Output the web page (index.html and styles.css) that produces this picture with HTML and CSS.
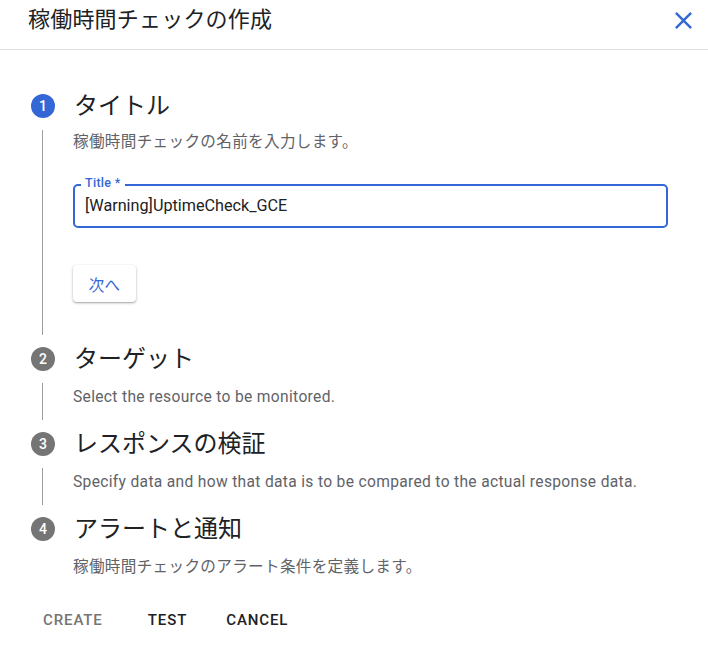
FILE: index.html
```html
<!DOCTYPE html>
<html lang="ja">
<head>
<meta charset="utf-8">
<link rel="stylesheet" href="styles.css">
</head>
<body>
<div class="dialog">
  <header class="header">
    <h1 class="header-title">稼働時間チェックの作成</h1>
    <button class="close-btn" aria-label="close">
      <svg viewBox="0 0 24 24" width="29" height="29"><path fill="#3367d6" d="M19 6.41L17.59 5 12 10.59 6.41 5 5 6.41 10.59 12 5 17.59 6.41 19 12 13.41 17.59 19 19 17.59 13.41 12z"/></svg>
    </button>
  </header>

  <main class="stepper">
    <section class="step">
      <div class="step-head">
        <span class="step-num active">1</span>
        <h2 class="step-title">タイトル</h2>
      </div>
      <div class="step-body step-body-open">
        <p class="step-desc">稼働時間チェックの名前を入力します。</p>
        <div class="field">
          <span class="field-label">Title *</span>
          <div class="field-value">[Warning]UptimeCheck_GCE</div>
        </div>
        <button class="next-btn">次へ</button>
      </div>
    </section>

    <section class="step">
      <div class="step-head">
        <span class="step-num">2</span>
        <h2 class="step-title">ターゲット</h2>
      </div>
      <div class="step-body">
        <p class="step-desc">Select the resource to be monitored.</p>
      </div>
    </section>

    <section class="step">
      <div class="step-head">
        <span class="step-num">3</span>
        <h2 class="step-title">レスポンスの検証</h2>
      </div>
      <div class="step-body">
        <p class="step-desc">Specify data and how that data is to be compared to the actual response data.</p>
      </div>
    </section>

    <section class="step step-last">
      <div class="step-head">
        <span class="step-num">4</span>
        <h2 class="step-title">アラートと通知</h2>
      </div>
      <div class="step-body">
        <p class="step-desc">稼働時間チェックのアラート条件を定義します。</p>
      </div>
    </section>
  </main>

  <footer class="actions">
    <button class="text-btn disabled">CREATE</button>
    <button class="text-btn btn-test">TEST</button>
    <button class="text-btn btn-cancel">CANCEL</button>
  </footer>
</div>
</body>
</html>
```

FILE: styles.css
```css
* { box-sizing: border-box; }

html, body {
  margin: 0;
  padding: 0;
  background: #ffffff;
}

body {
  font-family: Roboto, "Noto Sans CJK JP", sans-serif;
  color: #202124;
  width: 708px;
  height: 659px;
  overflow: hidden;
}

.header {
  height: 50px;
  border-bottom: 1px solid #e0e0e0;
  display: flex;
  align-items: flex-start;
  justify-content: space-between;
  padding-left: 28px;
  padding-right: 10px;
}

.header-title {
  margin: 0;
  font-size: 22px;
  font-weight: 400;
  line-height: 39px;
  letter-spacing: 0.2px;
  color: #202124;
}

.close-btn {
  border: none;
  background: none;
  padding: 0;
  margin-top: 6px;
  width: 29px;
  height: 29px;
  cursor: pointer;
  display: flex;
}

.stepper {
  padding-top: 32px;
}

.step-head {
  height: 48px;
  display: flex;
  align-items: center;
  padding-left: 31px;
}

.step-num {
  width: 24px;
  height: 24px;
  border-radius: 50%;
  background: #757575;
  color: #ffffff;
  font-size: 14px;
  font-weight: 500;
  display: flex;
  align-items: center;
  justify-content: center;
  margin-right: 19px;
  flex: none;
}

.step-num.active {
  background: #3367d6;
}

.step-title {
  margin: 0;
  font-size: 24px;
  font-weight: 400;
  line-height: 32px;
  color: #202124;
}

.step-body {
  margin-left: 42px;
  border-left: 1px solid #9e9e9e;
  padding: 4px 0 13px 30px;
}

.step-last .step-body {
  border-left-color: transparent;
}

.step-body-open {
  padding-top: 2px;
  padding-bottom: 33px;
}

.step-desc {
  margin: 0;
  font-size: 15.6px;
  line-height: 20px;
  letter-spacing: 0.32px;
  color: #5f6368;
}

.field {
  position: relative;
  margin-top: 32px;
  width: 595px;
  height: 44px;
  border: 2px solid #3367d6;
  border-radius: 5px;
  display: flex;
  align-items: center;
  padding-left: 10px;
}

.field-label {
  position: absolute;
  left: 6px;
  top: -10px;
  padding: 0 4px;
  background: #ffffff;
  color: #3367d6;
  font-size: 12.5px;
  font-weight: 500;
  line-height: 14px;
  letter-spacing: 0.3px;
}

.field-value {
  font-size: 16.2px;
  color: #202124;
  line-height: 20px;
}

.next-btn {
  margin-top: 37px;
  width: 63px;
  height: 37px;
  border: none;
  border-radius: 4px;
  background: #ffffff;
  color: #3367d6;
  font-family: Roboto, "Noto Sans CJK JP", sans-serif;
  font-size: 15.5px;
  letter-spacing: 0.3px;
  box-shadow: 0 1px 3px rgba(0, 0, 0, 0.28), 0 1px 1px rgba(0, 0, 0, 0.12);
  display: flex;
  align-items: center;
  justify-content: center;
  padding: 0;
}

.actions {
  display: flex;
  align-items: center;
  padding-left: 35px;
  margin-top: 12px;
}

.text-btn {
  border: none;
  background: none;
  height: 36px;
  padding: 0 8px;
  font-family: Roboto, sans-serif;
  font-size: 15px;
  font-weight: 500;
  letter-spacing: 0.9px;
  color: #202124;
  cursor: pointer;
}

.text-btn.disabled {
  color: #757575;
}

.btn-test {
  margin-left: 29px;
}

.btn-cancel {
  margin-left: 23px;
}
```
